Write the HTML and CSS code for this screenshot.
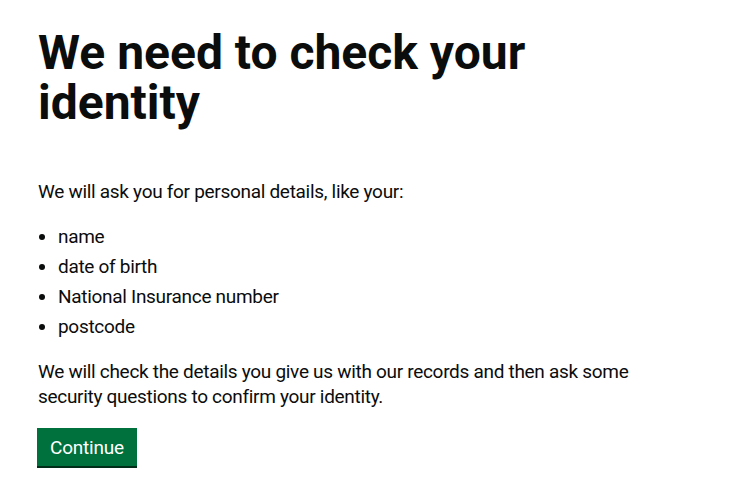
FILE: index.html
```html
<!DOCTYPE html>
<html lang="en">
<head>
<meta charset="utf-8">
<title>We need to check your identity</title>
<link rel="stylesheet" href="styles.css">
</head>
<body>
<main class="page">
  <h1 class="heading">We need to check your identity</h1>
  <p class="body">We will ask you for personal details, like your:</p>
  <ul class="list">
    <li>name</li>
    <li>date of birth</li>
    <li>National Insurance number</li>
    <li>postcode</li>
  </ul>
  <p class="body body-last">We will check the details you give us with our records and then ask some security questions to confirm your identity.</p>
  <button class="button" type="button">Continue</button>
</main>
</body>
</html>
```
FILE: styles.css
```css
html, body {
  margin: 0;
  background: #ffffff;
}
.page {
  padding: 28px 30px 20px 38px;
  max-width: 610px;
  color: #0b0c0c;
  font-family: Roboto, "Liberation Sans", Arial, sans-serif;
}
.heading {
  margin: 0 0 51px;
  font-size: 48px;
  line-height: 50px;
  font-weight: 700;
}
.body {
  margin: 0 0 20px;
  font-size: 19px;
  line-height: 25px;
  letter-spacing: -0.3px;
}
.body-last {
  margin-bottom: 19px;
}
.list {
  margin: 0 0 20px;
  padding-left: 20px;
  font-size: 19px;
  line-height: 25px;
  letter-spacing: -0.3px;
}
.list li {
  margin-bottom: 5px;
}
.button {
  display: block;
  margin-left: -1px;
  font-family: inherit;
  font-size: 19px;
  line-height: 22px;
  letter-spacing: -0.2px;
  color: #ffffff;
  background: #00703c;
  border: 2px solid transparent;
  border-radius: 0;
  box-shadow: 0 2px 0 #002d18;
  padding: 7px 11px 5px;
  cursor: pointer;
}
```
